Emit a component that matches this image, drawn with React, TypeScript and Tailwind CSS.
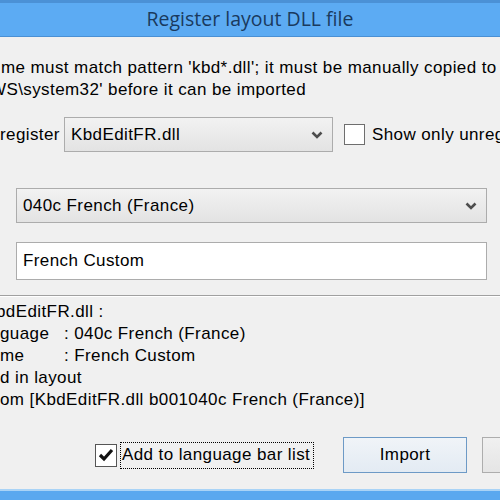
import React from 'react';

const Chevron: React.FC = () => (
  <svg width="12" height="8" viewBox="0 0 12 8" className="shrink-0">
    <polyline points="1.5,1.5 6,6 10.5,1.5" fill="none" stroke="#4d4d4d" strokeWidth="2.6" />
  </svg>
);

const Check: React.FC = () => (
  <svg width="16" height="14" viewBox="0 0 16 14">
    <polyline points="2,7 6,11 14,2" fill="none" stroke="#111" strokeWidth="3.2" />
  </svg>
);

const App: React.FC = () => {
  return (
    <div className="w-[500px] h-[500px] overflow-hidden bg-[#f0f0f0] flex flex-col font-['Liberation_Sans',Arial,sans-serif] text-[17px] tracking-[0.4px] text-black">
      {/* title bar */}
      <div className="h-[37px] shrink-0 bg-[#5cabf3] border-t-[3px] border-t-[#4b91d6] border-b border-b-[#4a90d4] flex items-center justify-center">
        <span className="font-['Open_Sans',sans-serif] text-[19.5px] tracking-normal text-[#1a3a5e] -mt-[2px]">Register layout DLL file</span>
      </div>

      <div className="flex-1 flex flex-col">
        <div className="mt-[20px] leading-[22px] whitespace-nowrap pl-[1px]">
          <div>me must match pattern 'kbd*.dll'; it must be manually copied to</div>
          <div className="-ml-[11px]">WS\system32' before it can be imported</div>
        </div>

        <div className="mt-[16px] flex items-center h-[35px] whitespace-nowrap">
          <span className="w-[64px] shrink-0">register</span>
          <div className="w-[269px] h-[35px] shrink-0 border border-[#acacac] bg-gradient-to-b from-[#f2f2f2] to-[#e3e3e3] flex items-center justify-between pl-[6px] pr-[9px]">
            <span>KbdEditFR.dll</span>
            <Chevron />
          </div>
          <div className="ml-[11px] w-[21px] h-[21px] shrink-0 border border-[#6e6e6e] bg-white" />
          <span className="ml-[7px]">Show only unregistered</span>
        </div>

        <div className="mt-[36px] ml-[16px] w-[471px] h-[35px] border border-[#acacac] bg-gradient-to-b from-[#f2f2f2] to-[#e3e3e3] flex items-center justify-between pl-[6px] pr-[9px]">
          <span>040c French (France)</span>
          <Chevron />
        </div>

        <div className="mt-[19px] ml-[16px] w-[471px] h-[38px] border border-[#acacac] bg-white flex items-center pl-[6px]">
          <span>French Custom</span>
        </div>

        <div className="mt-[15px] border-t border-t-[#a0a0a0] border-b border-b-white" />

        <div className="mt-[4px] leading-[22px] whitespace-nowrap">
          <div className="-ml-[4px]">bdEditFR.dll :</div>
          <div className="flex">
            <span className="w-[64px]">guage</span>
            <span>: 040c French (France)</span>
          </div>
          <div className="flex">
            <span className="w-[64px]">me</span>
            <span>: French Custom</span>
          </div>
          <div>d in layout</div>
          <div>om [KbdEditFR.dll b001040c French (France)]</div>
        </div>

        <div className="mt-[26px] flex items-center h-[36px] whitespace-nowrap">
          <div className="ml-[95px] w-[22px] h-[23px] shrink-0 border border-[#555] bg-white flex items-center justify-center">
            <Check />
          </div>
          <div className="ml-[3px] w-[194px] shrink-0 h-[27px] border border-dotted border-black flex items-center pl-[1px]">
            Add to language bar list
          </div>
          <button className="ml-[29px] w-[124px] h-[36px] shrink-0 border border-[#6d9ac6] bg-gradient-to-b from-[#f0f4f8] to-[#e3ebf3] flex items-center justify-center">
            Import
          </button>
          <button className="ml-[15px] w-[124px] h-[36px] shrink-0 border border-[#adadad] bg-gradient-to-b from-[#f0f0f0] to-[#e5e5e5]">
            Cancel
          </button>
        </div>
      </div>

      {/* bottom frame */}
      <div className="h-[11px] shrink-0 border-t-[2px] border-t-[#a9d3f6] bg-[#5aa8ef]" />
    </div>
  );
};

export default App;
